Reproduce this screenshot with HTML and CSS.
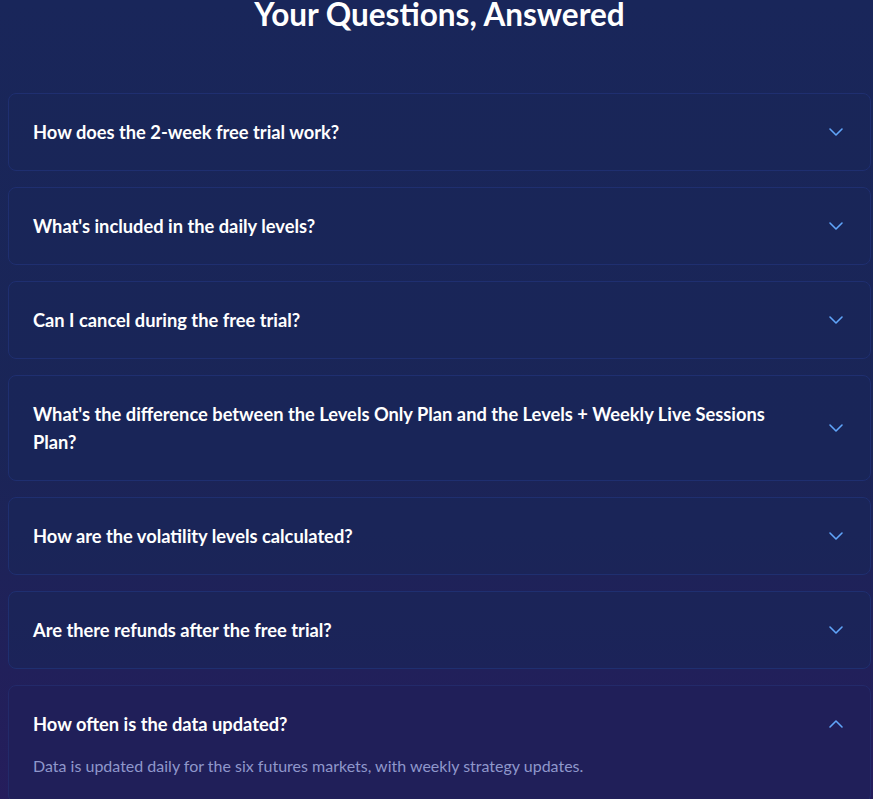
FILE: index.html
```html
<!DOCTYPE html>
<html lang="en">
<head>
<meta charset="utf-8">
<title>FAQ</title>
<link rel="stylesheet" href="styles.css">
</head>
<body>
<section class="faq">
  <h2 class="faq-title">Your Questions, Answered</h2>
  <div class="faq-list">
    <div class="faq-item">
      <div class="faq-q"><span>How does the 2-week free trial work?</span>
        <svg class="chev" viewBox="0 0 24 24"><path d="m6 9 6 6 6-6"/></svg></div>
    </div>
    <div class="faq-item">
      <div class="faq-q"><span>What's included in the daily levels?</span>
        <svg class="chev" viewBox="0 0 24 24"><path d="m6 9 6 6 6-6"/></svg></div>
    </div>
    <div class="faq-item">
      <div class="faq-q"><span>Can I cancel during the free trial?</span>
        <svg class="chev" viewBox="0 0 24 24"><path d="m6 9 6 6 6-6"/></svg></div>
    </div>
    <div class="faq-item">
      <div class="faq-q"><span>What's the difference between the Levels Only Plan and the Levels + Weekly Live Sessions Plan?</span>
        <svg class="chev" viewBox="0 0 24 24"><path d="m6 9 6 6 6-6"/></svg></div>
    </div>
    <div class="faq-item">
      <div class="faq-q"><span>How are the volatility levels calculated?</span>
        <svg class="chev" viewBox="0 0 24 24"><path d="m6 9 6 6 6-6"/></svg></div>
    </div>
    <div class="faq-item">
      <div class="faq-q"><span>Are there refunds after the free trial?</span>
        <svg class="chev" viewBox="0 0 24 24"><path d="m6 9 6 6 6-6"/></svg></div>
    </div>
    <div class="faq-item open">
      <div class="faq-q"><span>How often is the data updated?</span>
        <svg class="chev" viewBox="0 0 24 24"><path d="m18 15-6-6-6 6"/></svg></div>
      <p class="faq-a">Data is updated daily for the six futures markets, with weekly strategy updates.</p>
    </div>
  </div>
</section>
</body>
</html>
```
FILE: styles.css
```css
html, body {
  margin: 0;
  padding: 0;
}
body {
  min-height: 100vh;
  background: linear-gradient(180deg, #19265a 0%, #1a2557 55%, #251d5c 100%);
  font-family: Lato, "Noto Sans", sans-serif;
  color: #fff;
  overflow: hidden;
}
.faq {
  padding: 0 2px 0 8px;
}
.faq-title {
  margin: 0;
  font-size: 31.5px;
  line-height: 28px;
  font-weight: 700;
  text-align: center;
  color: #fff;
}
.faq-list {
  margin-top: 65px;
  display: flex;
  flex-direction: column;
  gap: 16px;
}
.faq-item {
  border: 1px solid #1f2f70;
  border-radius: 8px;
  background: rgba(25, 38, 88, 0.6);
  padding: 24px 22px 24px 24px;
}
.faq-item.open {
  background: #201f59;
  border-color: #232a6a;
}
.faq-q {
  display: flex;
  align-items: center;
  justify-content: space-between;
  gap: 40px;
  font-size: 18.3px;
  line-height: 28px;
  font-weight: 700;
}
.chev {
  flex: none;
  width: 24px;
  height: 24px;
  fill: none;
  stroke: #60a5fa;
  stroke-width: 1.6;
  stroke-linecap: round;
  stroke-linejoin: round;
}
.faq-a {
  margin: 16px 0 0;
  font-size: 16px;
  line-height: 24px;
  color: #8f97cb;
}
```
